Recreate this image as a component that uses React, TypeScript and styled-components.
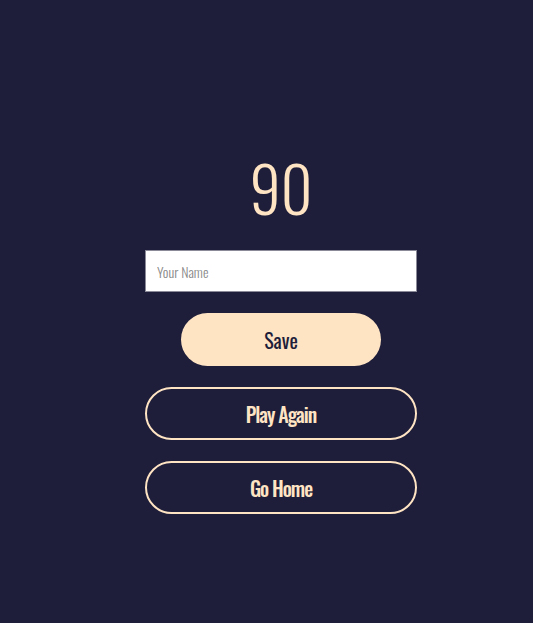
import React, { useState } from 'react';
import styled, { createGlobalStyle } from 'styled-components';

const GlobalStyle = createGlobalStyle`
  html, body {
    margin: 0;
    padding: 0;
    background: #1e1e3a;
  }
  body {
    font-family: "Oswald", "Liberation Sans Narrow", "DejaVu Sans Condensed", sans-serif;
  }
`;

const App: React.FC = () => {
    const [nome, setNome] = useState<string>('');

    return (
        <>
            <GlobalStyle />
            <Page>
                <Panel>
                    <Score>90</Score>
                    <NameInput
                        placeholder="Your Name"
                        value={nome}
                        onChange={e => setNome(e.target.value)}
                    />
                    <SaveButton>Save</SaveButton>
                    <OutlineButton>Play Again</OutlineButton>
                    <OutlineButton>Go Home</OutlineButton>
                </Panel>
            </Page>
        </>
    );
};

const Page = styled.div`
  min-height: 623px;
  box-sizing: border-box;
  display: flex;
  justify-content: center;
  padding: 146px 0 0 29px;
`;

const Panel = styled.div`
  width: 272px;
  display: flex;
  flex-direction: column;
  align-items: center;
`;

const Score = styled.div`
  color: #ffe4c4;
  font-size: 62px;
  line-height: 82px;
  font-weight: 300;
  margin-bottom: 22px;
`;

const NameInput = styled.input`
  width: 100%;
  height: 42px;
  box-sizing: border-box;
  border: 1px solid #8a8a99;
  background: #fff;
  padding: 0 11px;
  font-family: inherit;
  font-size: 14px;
  font-weight: 300;
  color: #333;
  outline: none;

  &::placeholder {
    color: #8a8a8a;
  }
`;

const SaveButton = styled.button`
  width: 200px;
  height: 53px;
  margin-top: 21px;
  border: none;
  border-radius: 27px;
  background: #ffe4c4;
  color: #1e1e3a;
  font-family: inherit;
  font-size: 20px;
  cursor: pointer;
`;

const OutlineButton = styled.button`
  width: 100%;
  height: 53px;
  margin-top: 21px;
  border: 2px solid #ffe4c4;
  border-radius: 27px;
  background: transparent;
  color: #ffe4c4;
  font-family: inherit;
  font-size: 20px;
  font-weight: 500;
  letter-spacing: -1px;
  cursor: pointer;
`;

export default App;
